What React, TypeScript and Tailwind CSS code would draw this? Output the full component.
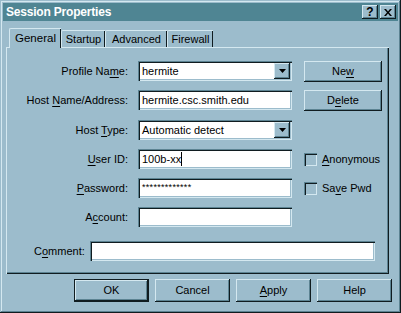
import React from 'react';

const raised = 'shadow-[inset_-1px_-1px_0_#101c20,inset_1px_1px_0_#d4e8f0,inset_-2px_-2px_0_#5c8392]';
const sunken = 'shadow-[inset_1px_1px_0_#5c8392,inset_2px_2px_0_#101c20,inset_-1px_-1px_0_#d4e8f0,inset_-2px_-2px_0_#9cbccc]';

function U({ children }: { children: React.ReactNode }) {
    return <span className="underline underline-offset-[2px]">{children}</span>;
}

function Field({ value, combo, w = 'w-[154px]', caret }: { value?: React.ReactNode; combo?: boolean; w?: string; caret?: boolean }) {
    return (
        <div className={`relative h-[20px] ${w} bg-white ${sunken} flex items-center pl-[4px]`}>
            <span className="leading-none">{value}</span>
            {caret && <span className="w-px h-[14px] bg-black" />}
            {combo && (
                <div className={`absolute right-[2px] top-[2px] w-[16px] h-[16px] bg-[#9cbccc] ${raised} flex items-center justify-center`}>
                    <svg width="7" height="4" viewBox="0 0 7 4"><path d="M0 0h7L3.5 4z" fill="#000" /></svg>
                </div>
            )}
        </div>
    );
}

function Btn({ children, def, w = 'w-[75px]', h = 'h-[23px]' }: { children: React.ReactNode; def?: boolean; w?: string; h?: string }) {
    return (
        <div className={`${w} ${h} ${def ? 'border border-[#101c20]' : ''}`}>
            <div className={`w-full h-full bg-[#9cbccc] ${raised} flex items-center justify-center`}>{children}</div>
        </div>
    );
}

function Check({ children }: { children: React.ReactNode }) {
    return (
        <div className="flex items-center gap-[5px]">
            <div className={`w-[13px] h-[13px] bg-[#9cbccc] ${sunken}`} />
            <span>{children}</span>
        </div>
    );
}

export default function App() {
    const rows = [
        { label: <>Profile Na<U>m</U>e:</>, field: <Field value="hermite" combo />, side: <Btn w="w-[78px]" h="h-[21px]">Ne<U>w</U></Btn>, mt: 'mt-[13px]' },
        { label: <>Host <U>N</U>ame/Address:</>, field: <Field value="hermite.csc.smith.edu" />, side: <Btn w="w-[78px]" h="h-[21px]">D<U>e</U>lete</Btn>, mt: 'mt-[9px]' },
        { label: <>Host <U>T</U>ype:</>, field: <Field value="Automatic detect" combo />, side: null, mt: 'mt-[10px]' },
        { label: <><U>U</U>ser ID:</>, field: <Field value="100b-xx" caret />, side: <Check><U>A</U>nonymous</Check>, mt: 'mt-[9px]' },
        { label: <><U>P</U>assword:</>, field: <Field value={<span className="text-[9px] tracking-[0.3px] relative top-[-2px]">*************</span>} />, side: <Check>Sa<U>v</U>e Pwd</Check>, mt: 'mt-[9px]' },
        { label: <>A<U>c</U>count:</>, field: <Field />, side: null, mt: 'mt-[9px]' },
    ];

    const tabs = [
        { t: 'Startup', w: 'w-[44px]' },
        { t: 'Advanced', w: 'w-[62px]' },
        { t: 'Firewall', w: 'w-[46px]' },
    ];

    return (
        <div className="w-[401px] h-[313px] bg-[#9cbccc] text-black text-[11px] font-['Liberation_Sans',Arial,sans-serif] shadow-[inset_-1px_-1px_0_#101c20,inset_1px_1px_0_#9cbccc,inset_-2px_-2px_0_#5c8392,inset_2px_2px_0_#d4e8f0] p-[3px] flex flex-col select-none">
            {/* Title bar */}
            <div className="h-[18px] bg-[#4f8593] flex items-center pl-[3px] pr-[2px]">
                <span className="text-white font-bold text-[12px] tracking-[-0.2px]">Session Properties</span>
                <div className="ml-auto flex gap-[2px]">
                    <div className={`w-[16px] h-[14px] bg-[#9cbccc] ${raised} flex items-center justify-center font-bold text-[12px] leading-none`}>?</div>
                    <div className={`w-[16px] h-[14px] bg-[#9cbccc] ${raised} flex items-center justify-center`}>
                        <svg width="8" height="7" viewBox="0 0 8 7"><path d="M0 0h2l2 2.5L6 0h2L5 3.5 8 7H6L4 4.5 2 7H0l3-3.5z" fill="#000" /></svg>
                    </div>
                </div>
            </div>

            {/* Tabs */}
            <div className="flex items-end h-[26px] pl-[6px]">
                <div className="w-[52px] h-[20px] bg-[#9cbccc] border-l border-t border-[#d4e8f0] rounded-tl-[2px] flex items-center justify-center relative top-[1px] shadow-[inset_-1px_0_0_#101c20] z-10 text-[11.5px]">General</div>
                {tabs.map((t) => (
                    <div key={t.t} className={`${t.w} h-[17px] border-l border-t border-[#d4e8f0] rounded-tl-[2px] flex items-center justify-center shadow-[inset_-1px_0_0_#101c20] text-[11px]`}>{t.t}</div>
                ))}
            </div>

            {/* Panel */}
            <div className="mx-[3px] w-[383px] h-[227px] border-t border-l border-[#d4e8f0] shadow-[inset_-1px_-1px_0_#101c20,inset_-2px_-2px_0_#5c8392] flex flex-col">
                {rows.map((r, i) => (
                    <div key={i} className={`flex items-center h-[20px] ${r.mt}`}>
                        <div className="w-[121px] text-right">{r.label}</div>
                        <div className="ml-[10px]">{r.field}</div>
                        <div className="ml-[12px]">{r.side}</div>
                    </div>
                ))}
                <div className="flex items-center h-[20px] mt-[14px]">
                    <div className="ml-[27px] w-[56px]">C<U>o</U>mment:</div>
                    <Field w="w-[285px]" />
                </div>
            </div>

            {/* Buttons */}
            <div className="flex justify-end gap-[6px] mt-[5px] pr-[6px]">
                <Btn def>OK</Btn>
                <Btn>Cancel</Btn>
                <Btn><U>A</U>pply</Btn>
                <Btn>Help</Btn>
            </div>
        </div>
    );
}
